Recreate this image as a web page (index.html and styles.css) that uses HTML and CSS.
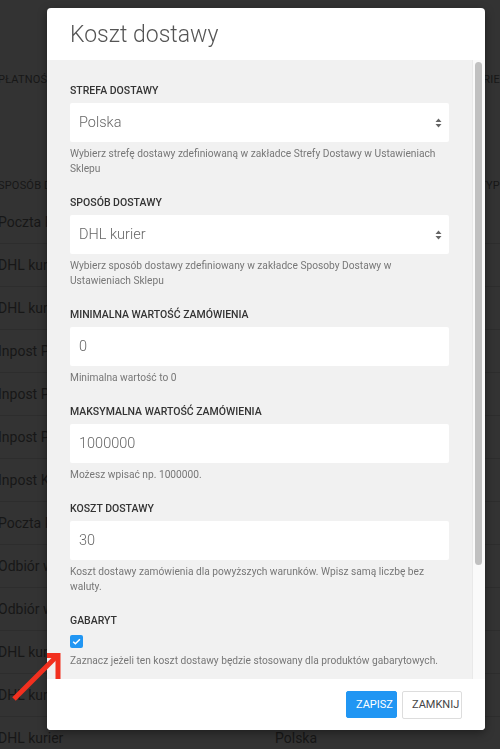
FILE: index.html
```html
<!DOCTYPE html>
<html lang="pl">
<head>
<meta charset="utf-8">
<title>Koszt dostawy</title>
<link rel="stylesheet" href="styles.css">
</head>
<body>
<div class="page">
  <div class="bg-head bg-head-1"><span class="c1">PŁATNOŚCI</span><span class="c3">KATEGORIE</span></div>
  <div class="bg-head bg-head-2"><span class="c1">SPOSÓB DOSTAWY</span><span class="c2">STREFA</span><span class="c3">TYP</span></div>
  <ul class="bg-rows">
    <li><span class="c1">Poczta Polska</span><span class="c2">Polska</span></li>
    <li><span class="c1">DHL kurier</span><span class="c2">Polska</span></li>
    <li><span class="c1">DHL kurier</span><span class="c2">Polska</span></li>
    <li><span class="c1">Inpost Paczkomaty</span><span class="c2">Polska</span></li>
    <li><span class="c1">Inpost Paczkomaty</span><span class="c2">Polska</span></li>
    <li><span class="c1">Inpost Paczkomaty</span><span class="c2">Polska</span></li>
    <li><span class="c1">Inpost Kurier</span><span class="c2">Polska</span></li>
    <li><span class="c1">Poczta Polska</span><span class="c2">Polska</span></li>
    <li><span class="c1">Odbiór własny</span><span class="c2">Polska</span></li>
    <li><span class="c1">Odbiór własny</span><span class="c2">Polska</span></li>
    <li><span class="c1">DHL kurier</span><span class="c2">Polska</span></li>
    <li><span class="c1">DHL kurier</span><span class="c2">Polska</span></li>
    <li><span class="c1">DHL kurier</span><span class="c2">Polska</span></li>
  </ul>
</div>

<div class="modal">
  <div class="modal-header">
    <h1 class="modal-title">Koszt dostawy</h1>
  </div>
  <div class="modal-body">
    <div class="body-content">
      <div class="field">
        <label class="field-label">Strefa dostawy</label>
        <div class="control control-select">
          <span>Polska</span>
          <svg class="select-arrows" width="7" height="10" viewBox="0 0 7 10"><path d="M3.5 0.5 L6.5 4 H0.5 Z M3.5 9.5 L6.5 6 H0.5 Z" fill="#666"/></svg>
        </div>
        <p class="help">Wybierz strefę dostawy zdefiniowaną w zakładce Strefy Dostawy w Ustawieniach Sklepu</p>
      </div>
      <div class="field">
        <label class="field-label">Sposób dostawy</label>
        <div class="control control-select">
          <span>DHL kurier</span>
          <svg class="select-arrows" width="7" height="10" viewBox="0 0 7 10"><path d="M3.5 0.5 L6.5 4 H0.5 Z M3.5 9.5 L6.5 6 H0.5 Z" fill="#666"/></svg>
        </div>
        <p class="help">Wybierz sposób dostawy zdefiniowany w zakładce Sposoby Dostawy w Ustawieniach Sklepu</p>
      </div>
      <div class="field">
        <label class="field-label">Minimalna wartość zamówienia</label>
        <div class="control"><span>0</span></div>
        <p class="help">Minimalna wartość to 0</p>
      </div>
      <div class="field">
        <label class="field-label">Maksymalna wartość zamówienia</label>
        <div class="control"><span>1000000</span></div>
        <p class="help">Możesz wpisać np. 1000000.</p>
      </div>
      <div class="field">
        <label class="field-label">Koszt dostawy</label>
        <div class="control"><span>30</span></div>
        <p class="help">Koszt dostawy zamówienia dla powyższych warunków. Wpisz samą liczbę bez waluty.</p>
      </div>
      <div class="field field-last">
        <label class="field-label">Gabaryt</label>
        <span class="checkbox">
          <svg width="13" height="13" viewBox="0 0 13 13"><path d="M3.2 6.7 L5.4 8.8 L9.9 4.3" fill="none" stroke="#fff" stroke-width="1.5"/></svg>
        </span>
        <p class="help help-check">Zaznacz jeżeli ten koszt dostawy będzie stosowany dla produktów gabarytowych.</p>
      </div>
    </div>
    <div class="scrollbar"><div class="scrollbar-thumb"></div></div>
  </div>
  <div class="modal-footer">
    <button class="btn btn-primary">Zapisz</button>
    <button class="btn btn-default">Zamknij</button>
  </div>
</div>

<svg class="pointer-arrow" width="500" height="749" viewBox="0 0 500 749">
  <path d="M14 699 L56 657" stroke="#f2301f" stroke-width="5" fill="none"/>
  <path d="M47 655.5 H58 V679" stroke="#f2301f" stroke-width="5" fill="none"/>
</svg>
</body>
</html>
```
FILE: styles.css
```css
* { box-sizing: border-box; }

html, body {
  margin: 0;
  padding: 0;
  height: 100%;
}

body {
  background: #333333;
  font-family: Roboto, "Liberation Sans", sans-serif;
  overflow: hidden;
}

/* background page (dimmed) */
.page {
  padding-top: 72px;
  color: #171717;
}

.bg-head {
  display: flex;
  font-size: 11px;
  line-height: 16px;
  letter-spacing: 0.2px;
}

.bg-head-2 {
  margin-top: 90px;
}

.bg-head .c1,
.bg-rows .c1 {
  width: 277px;
  margin-left: -2px;
  white-space: nowrap;
}

.bg-head .c2 {
  width: 212px;
}

.bg-head-1 .c1 {
  width: 489px;
}

.bg-head .c3 {
  white-space: nowrap;
}

.bg-rows {
  list-style: none;
  margin: 7px 0 0;
  padding: 0;
}

.bg-rows li {
  display: flex;
  align-items: center;
  height: 43px;
  font-size: 14px;
  border-bottom: 1px solid #2d2d2d;
}

/* modal */
.modal {
  position: fixed;
  top: 8px;
  left: 47px;
  width: 438px;
  height: 722px;
  background: #fff;
  border-radius: 4px;
  display: flex;
  flex-direction: column;
  overflow: hidden;
  box-shadow: 0 3px 10px rgba(0, 0, 0, 0.4);
}

.modal-header {
  height: 52px;
  flex: none;
  display: flex;
  align-items: center;
  padding: 0 23px;
}

.modal-title {
  margin: 0;
  font-size: 23px;
  font-weight: 300;
  color: #555;
  line-height: 1;
}

.modal-body {
  flex: 1;
  min-height: 0;
  display: flex;
  background: #f1f1f1;
}

.body-content {
  flex: 1;
  min-width: 0;
  overflow: hidden;
  padding: 24px 23px 0 23px;
}

.scrollbar {
  flex: none;
  width: 13px;
  background: #fafafa;
  border-left: 1px solid #e9e9e9;
  padding: 2px 3px 0 2px;
}

.scrollbar-thumb {
  height: 503px;
  background: #c1c1c1;
  border-radius: 4px;
}

.field {
  margin-bottom: 20px;
}

.field-last {
  margin-bottom: 0;
}

.field-label {
  display: block;
  font-size: 10.5px;
  line-height: 14px;
  font-weight: 500;
  color: #333;
  text-transform: uppercase;
  margin-bottom: 5px;
}

.control {
  height: 39px;
  background: #fff;
  border-radius: 2px;
  display: flex;
  align-items: center;
  justify-content: space-between;
  padding: 0 7px 0 9px;
  font-size: 14.5px;
  font-weight: 300;
  color: #666;
}

.select-arrows {
  display: block;
}

.help {
  margin: 4px 0 0;
  font-size: 10.2px;
  line-height: 15px;
  color: #777;
}

.checkbox {
  display: block;
  width: 13px;
  height: 13px;
  margin-top: 7px;
  background: #2196f3;
  border-radius: 2px;
}

.checkbox svg {
  display: block;
}

.help-check {
  margin-top: 5px;
}

.modal-footer {
  height: 51px;
  flex: none;
  display: flex;
  justify-content: flex-end;
  align-items: center;
  gap: 5px;
  padding: 0 23px;
  background: #fff;
}

.btn {
  font-family: Roboto, "Liberation Sans", sans-serif;
  font-size: 11px;
  text-transform: uppercase;
  border-radius: 2px;
  height: 27px;
  padding: 0 9px;
  cursor: pointer;
}

.btn-primary {
  background: #2196f3;
  color: #fff;
  border: 1px solid #2196f3;
  width: 51px;
}

.btn-default {
  background: #fff;
  color: #444;
  border: 1px solid #ddd;
  width: 60px;
  height: 28px;
}

.pointer-arrow {
  position: fixed;
  top: 0;
  left: 0;
  pointer-events: none;
}
```
